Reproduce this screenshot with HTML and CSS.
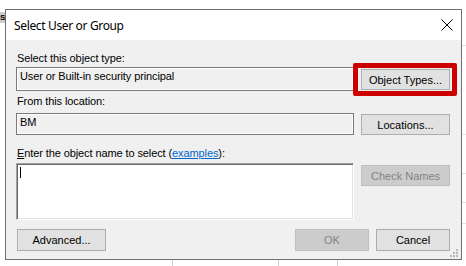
FILE: index.html
```html
<!DOCTYPE HTML>
<html lang="en">
<head>
  <meta charset="UTF-8">
  <title>Select User or Group</title>
  <link rel="stylesheet" href="styles.css">
</head>
<body>

	<div class="backdrop-tab">S</div>

	<div class="dialog">

		<div class="titlebar">
			<span class="title">Select User or Group</span>
			<svg class="close" width="12" height="12" viewBox="0 0 12 12">
				<path d="M0.5 0.5 L11.5 11.5 M11.5 0.5 L0.5 11.5" stroke="#000" stroke-width="1" fill="none"/>
			</svg>
		</div>

		<div class="dialog-body">

			<div class="label label-type">Select this object type:</div>
			<div class="row row-type">
				<div class="field">User or Built-in security principal</div>
				<div class="btn-wrap">
					<button class="btn">Object Types...</button>
					<span class="highlight"></span>
				</div>
			</div>

			<div class="label label-loc">From this location:</div>
			<div class="row row-loc">
				<div class="field">BM</div>
				<button class="btn">Locations...</button>
			</div>

			<div class="label label-name"><u>E</u>nter the object name to select (<a href="#">examples</a>):</div>
			<div class="row row-name">
				<div class="names"><span class="caret"></span></div>
				<button class="btn" disabled>Check Names</button>
			</div>

			<div class="footer">
				<button class="btn btn-advanced">Advanced...</button>
				<div class="footer-right">
					<button class="btn btn-small" disabled>OK</button>
					<button class="btn btn-small">Cancel</button>
				</div>
			</div>

			<svg class="grip" width="8" height="8" viewBox="0 0 8 8">
				<rect x="6" y="0" width="2" height="2" fill="#b8b8b8"/>
				<rect x="3" y="3" width="2" height="2" fill="#b8b8b8"/>
				<rect x="6" y="3" width="2" height="2" fill="#b8b8b8"/>
				<rect x="0" y="6" width="2" height="2" fill="#b8b8b8"/>
				<rect x="3" y="6" width="2" height="2" fill="#b8b8b8"/>
				<rect x="6" y="6" width="2" height="2" fill="#b8b8b8"/>
			</svg>
		</div>
	</div>

</body>
</html>
```

FILE: styles.css
```css
html { height: 100% }

body {
	margin: 0;
	height: 266px;
	overflow: hidden;
	position: relative;
	font-family: "Liberation Sans", Arial, sans-serif;
	font-size: 11px;
	color: #000;
	background:
		linear-gradient(#e3e3e3, #e3e3e3) 462px 45px / 4px 1px no-repeat,
		linear-gradient(#e3e3e3, #e3e3e3) 462px 134px / 4px 1px no-repeat,
		linear-gradient(#e3e3e3, #e3e3e3) 462px 173px / 4px 1px no-repeat,
		linear-gradient(#e3e3e3, #e3e3e3) 462px 202px / 4px 1px no-repeat,
		linear-gradient(#e3e3e3, #e3e3e3) 462px 223px / 4px 1px no-repeat,
		linear-gradient(#cfcfcf, #cfcfcf) 172px 260px / 1px 6px no-repeat,
		linear-gradient(#cfcfcf, #cfcfcf) 278px 260px / 1px 6px no-repeat,
		linear-gradient(#cfcfcf, #cfcfcf) 337px 260px / 1px 6px no-repeat,
		#fff;
}

/* bit of the window behind the dialog */
.backdrop-tab {
	position: absolute;
	left: 0; top: 12px;
	width: 5px; height: 11px;
	background: #cdcdcd;
	font-size: 8px;
	line-height: 11px;
	font-weight: bold;
}

.dialog {
	position: absolute;
	left: 5px; top: 9px;
	width: 455px;
	border: 1px solid #6f6f6f;
	background: #f0f0f0;
}

.titlebar {
	height: 30px;
	background: #fff;
	display: flex;
	align-items: center;
	justify-content: space-between;
	padding: 0 8px 0 8px;
}

.title {
	font-family: "Noto Sans", sans-serif;
	font-size: 12px;
	letter-spacing: -0.35px;
}

.close { display: block; margin-top: -1px }

.dialog-body {
	position: relative;
	padding: 12px 11px 8px 10px;
}

.label {
	line-height: 13px;
	padding-left: 1px;
	white-space: nowrap;
	letter-spacing: -0.1px;
}
.label a { color: #0066cc }
.label-loc  { margin-top: 4px }
.label-name { margin-top: 12px }

.row {
	display: grid;
	grid-template-columns: 338px 89px;
	column-gap: 7px;
	align-items: start;
}
.row-type { margin-top: 2px; height: 24px }
.row-loc  { margin-top: 5px; height: 22px }
.row-name { margin-top: 3px; height: 57px }

.field {
	box-sizing: border-box;
	height: 100%;
	border: 1px solid #7a7a7a;
	box-shadow: inset 0 0 0 1px #fff;
	padding: 2px 3px 0;
	line-height: 13px;
	white-space: nowrap;
	letter-spacing: -0.1px;
}

.names {
	box-sizing: border-box;
	height: 100%;
	background: #fff;
	border: 1px solid;
	border-color: #a0a0a0 #fff #fff #a0a0a0;
	box-shadow: inset 1px 1px 0 #696969, inset -1px -1px 0 #e3e3e3;
	padding: 3px 0 0 3px;
}
.caret {
	display: block;
	width: 1px;
	height: 11px;
	background: #000;
}

.btn {
	box-sizing: border-box;
	display: block;
	width: 89px;
	height: 21px;
	padding: 0;
	border: 1px solid #adadad;
	background: #e1e1e1;
	font-family: "Liberation Sans", Arial, sans-serif;
	font-size: 11px;
	color: #000;
}
.btn:disabled {
	background: #cccccc;
	border-color: #bfbfbf;
	color: #838383;
}

.row-type .btn-wrap { position: relative; margin-top: 2px }
.row-loc .btn  { margin-top: 1px }
.row-name .btn { margin-top: 2px }

.highlight {
	position: absolute;
	left: -8px; right: -7px;
	top: -6px; bottom: -6px;
	border: 5px solid #cc0000;
	border-radius: 2px;
}

.footer {
	margin-top: 9px;
	display: flex;
	justify-content: space-between;
}
.footer .btn { height: 22px }
.btn-advanced { margin-left: 1px }
.footer-right { display: flex; gap: 7px }
.btn-small { width: 74px }

.grip {
	position: absolute;
	right: 3px; bottom: 2px;
}
```
